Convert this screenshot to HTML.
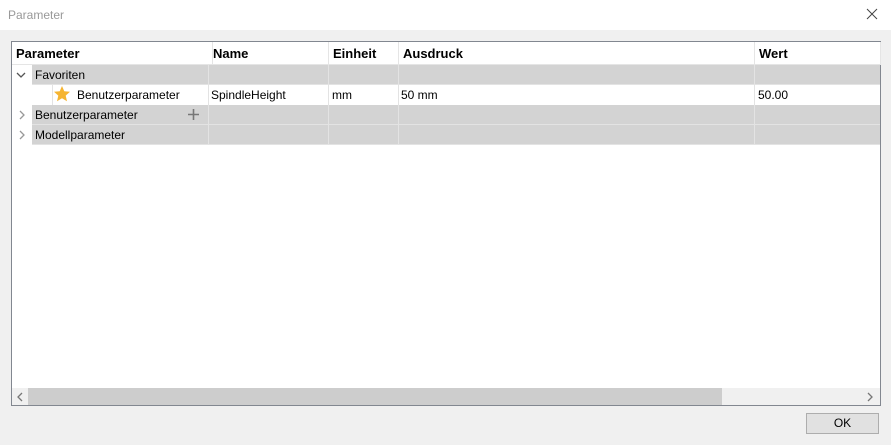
<!DOCTYPE html><html><head><style>
body{margin:0;width:891px;height:445px;background:#f0f0f0;font-family:"Liberation Sans",Arial,sans-serif;font-size:12px;position:relative;overflow:hidden}
.a{position:absolute}
.title{left:0;top:0;width:891px;height:30px;background:#fff}
.box{left:11px;top:41px;width:868px;height:363px;border:1px solid #828790;background:#fff}
.h{top:0;height:22px;font-weight:bold;font-size:13px;line-height:23px;border-right:1px solid #e5e5e5;border-bottom:1px solid #e5e5e5}
.g{background:#d3d3d3;height:19px;border-bottom:1px solid #e3e3e3}
.v{top:0;width:1px;height:103px;background:#e3e3e3}
.t{line-height:20px;font-size:12px}
</style></head><body>
<div class="a title"><span class="a" style="left:8px;top:8px;color:#999;font-size:12px">Parameter</span>
<svg class="a" style="left:866px;top:8px" width="12" height="12"><path d="M1 1L11 11M11 1L1 11" stroke="#444" stroke-width="1"/></svg></div>
<div class="a box">
<div class="a h" style="left:0;width:196px;padding-left:4px">Parameter</div>
<div class="a h" style="left:197px;width:115px;padding-left:4px">Name</div>
<div class="a h" style="left:317px;width:65px;padding-left:4px">Einheit</div>
<div class="a h" style="left:387px;width:351px;padding-left:4px">Ausdruck</div>
<div class="a h" style="left:743px;width:121px;padding-left:4px">Wert</div>
<div class="a g" style="left:20px;top:23px;width:848px"></div>
<div class="a g" style="left:20px;top:63px;width:848px"></div>
<div class="a g" style="left:20px;top:83px;width:848px"></div>
<div class="a" style="left:40px;top:43px;width:1px;height:20px;background:#e3e3e3"></div>
<div class="a v" style="left:196px;top:23px;height:80px"></div>
<div class="a v" style="left:316px;top:23px;height:80px"></div>
<div class="a v" style="left:386px;top:23px;height:80px"></div>
<div class="a v" style="left:742px;top:23px;height:80px"></div>
<svg class="a" style="left:4px;top:28px" width="10" height="10"><path d="M1 3L5 7L9 3" stroke="#555" fill="none" stroke-width="1.3"/></svg>
<svg class="a" style="left:6px;top:68px" width="10" height="10"><path d="M2 1L6 5L2 9" stroke="#999" fill="none" stroke-width="1.3"/></svg>
<svg class="a" style="left:6px;top:88px" width="10" height="10"><path d="M2 1L6 5L2 9" stroke="#999" fill="none" stroke-width="1.3"/></svg>
<div class="a t" style="left:23px;top:23px">Favoriten</div>
<svg class="a" style="left:41px;top:43px" width="18" height="18"><path d="M9 1L11.3 6.3L17 6.8L12.7 10.6L14 16.3L9 13.3L4 16.3L5.3 10.6L1 6.8L6.7 6.3Z" fill="#f5b431"/></svg>
<div class="a t" style="left:65px;top:43px">Benutzerparameter</div>
<div class="a t" style="left:199px;top:43px">SpindleHeight</div>
<div class="a t" style="left:320px;top:43px">mm</div>
<div class="a t" style="left:389px;top:43px">50 mm</div>
<div class="a t" style="left:746px;top:43px">50.00</div>
<div class="a t" style="left:23px;top:63px">Benutzerparameter</div>
<svg class="a" style="left:176px;top:67px" width="11" height="11"><path d="M5.5 0V11M0 5.5H11" stroke="#777" stroke-width="1.6"/></svg>
<div class="a t" style="left:23px;top:83px">Modellparameter</div>
<div class="a" style="left:0;top:346px;width:868px;height:17px;background:#f0f0f0"></div>
<div class="a" style="left:16px;top:346px;width:694px;height:17px;background:#cdcdcd"></div>
<svg class="a" style="left:4px;top:350px" width="8" height="10"><path d="M6 1L2 5L6 9" stroke="#777" fill="none" stroke-width="1.3"/></svg>
<svg class="a" style="left:854px;top:350px" width="8" height="10"><path d="M2 1L6 5L2 9" stroke="#777" fill="none" stroke-width="1.3"/></svg>
</div>
<div class="a" style="left:806px;top:413px;width:71px;height:19px;border:1px solid #adadad;background:#e1e1e1;text-align:center;line-height:19px">OK</div>
</body></html>
